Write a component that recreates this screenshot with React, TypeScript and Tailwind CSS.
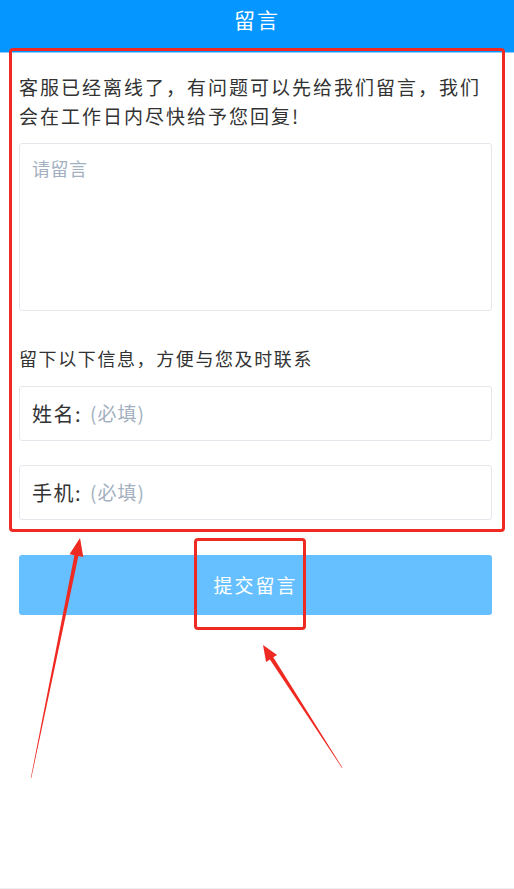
import { useState } from 'react'

const font = { fontFamily: '"Noto Sans CJK SC", "Noto Sans", sans-serif' }

function Field({ label }: { label: string }) {
  const [value, setValue] = useState('')
  return (
    <div className="flex items-center h-[55px] px-[12px] border border-[#e3e7ec] rounded-[3px] bg-white">
      <span className="text-[20px] tracking-[1.5px] text-[#333] leading-none">{label}</span>
      <input
        value={value}
        onChange={(e) => setValue(e.target.value)}
        placeholder="(必填)"
        className="ml-[8px] flex-1 outline-none text-[19px] tracking-[1px] text-[#333] placeholder:text-[#a3b0bf] bg-transparent"
        style={font}
      />
    </div>
  )
}

export default function App() {
  const [message, setMessage] = useState('')

  return (
    <div className="relative min-h-[889px] flex flex-col bg-white" style={font}>
      {/* header */}
      <div className="h-[53px] bg-[#0596ff] border-b border-[#8ecbff] flex justify-center">
        <h1 className="text-[21px] leading-[39px] text-white tracking-[2px]">留言</h1>
      </div>

      <div className="pl-[19px] pr-[22px] pt-[19px]">
        <p className="text-[19px] leading-[29px] tracking-[2px] text-[#333]">
          客服已经离线了，有问题可以先给我们留言，我们会在工作日内尽快给予您回复!
        </p>

        <textarea
          value={message}
          onChange={(e) => setMessage(e.target.value)}
          placeholder="请留言"
          className="mt-[13px] block w-full h-[168px] resize-none border border-[#e3e7ec] rounded-[3px] px-[12px] py-[11px] text-[18px] leading-[26px] tracking-[0.5px] text-[#333] placeholder:text-[#a3b0bf] outline-none"
          style={font}
        />

        <p className="mt-[33px] text-[18px] leading-[29px] tracking-[1.6px] text-[#333]">
          留下以下信息，方便与您及时联系
        </p>

        <div className="mt-[13px] flex flex-col gap-[24px]">
          <Field label="姓名:" />
          <Field label="手机:" />
        </div>

        <button
          type="button"
          className="mt-[35px] w-full h-[60px] rounded-[3px] bg-[#66bfff] text-white text-[19px] tracking-[2px]"
        >
          提交留言
        </button>
      </div>

      <div className="mt-auto h-px bg-[#eeeff1]" />

      {/* annotations */}
      <div className="absolute left-[9px] top-[48px] w-[496px] h-[484px] border-[3.5px] border-[#ee2a22] rounded-[4px] pointer-events-none" />
      <div className="absolute left-[194px] top-[538px] w-[112px] h-[92px] border-[3.5px] border-[#ee2a22] rounded-[4px] pointer-events-none" />
      <svg className="absolute left-0 top-0 pointer-events-none" width="514" height="889" viewBox="0 0 514 889">
        <polygon
          points="30.8,778 31.3,778 78.4,556 83.3,557 80,538 69.5,554.2 74.4,555.2"
          fill="#ee2a22"
        />
        <polygon
          points="342,768 342.4,767.6 273.3,657.3 277.1,654.9 263,645 266.1,661.9 269.9,659.5"
          fill="#ee2a22"
        />
      </svg>
    </div>
  )
}
